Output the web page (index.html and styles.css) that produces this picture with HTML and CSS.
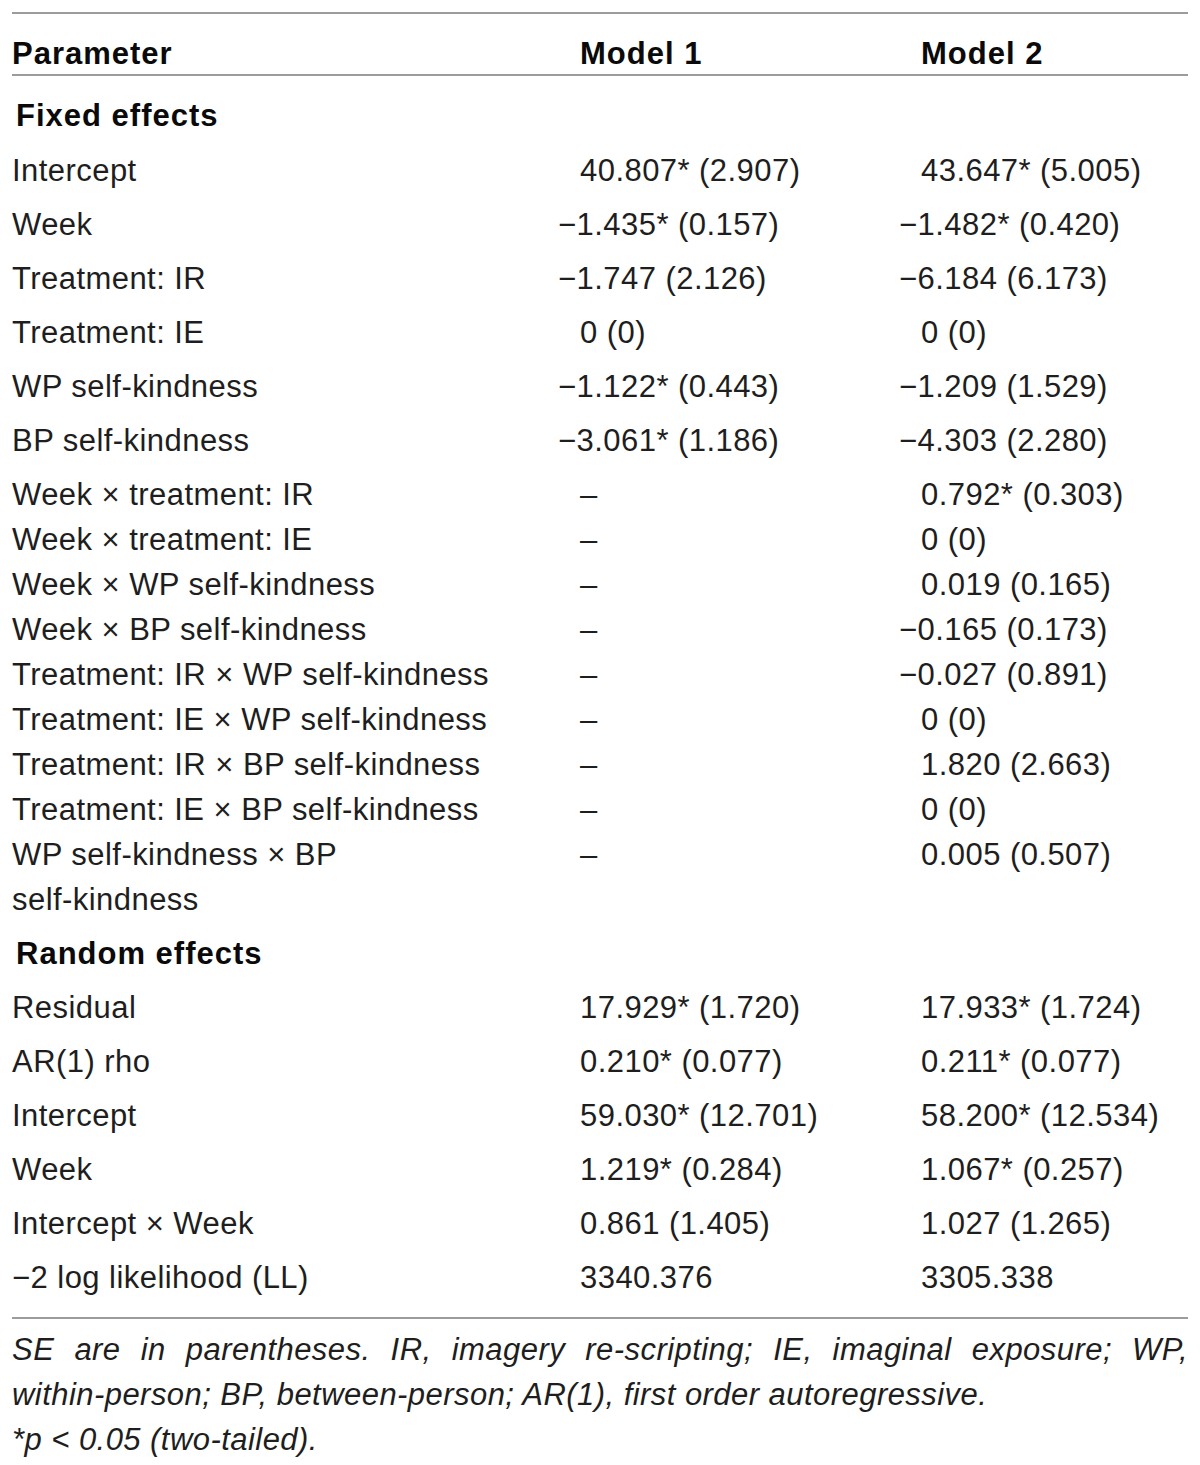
FILE: index.html
```html
<!DOCTYPE html>
<html lang="en">
<head>
<meta charset="utf-8">
<title>Table</title>
<link rel="stylesheet" href="styles.css">
</head>
<body>
<div class="wrap">
  <table class="stats">
    <colgroup>
      <col class="c-param">
      <col class="c-m1">
      <col class="c-m2">
    </colgroup>
    <thead>
      <tr>
        <th>Parameter</th>
        <th>Model 1</th>
        <th>Model 2</th>
      </tr>
    </thead>
    <tbody>
      <tr class="section first"><td colspan="3">Fixed effects</td></tr>
      <tr><td>Intercept</td><td>40.807* (2.907)</td><td>43.647* (5.005)</td></tr>
      <tr><td>Week</td><td class="neg">−1.435* (0.157)</td><td class="neg">−1.482* (0.420)</td></tr>
      <tr><td>Treatment: IR</td><td class="neg">−1.747 (2.126)</td><td class="neg">−6.184 (6.173)</td></tr>
      <tr><td>Treatment: IE</td><td>0 (0)</td><td>0 (0)</td></tr>
      <tr><td>WP self-kindness</td><td class="neg">−1.122* (0.443)</td><td class="neg">−1.209 (1.529)</td></tr>
      <tr><td>BP self-kindness</td><td class="neg">−3.061* (1.186)</td><td class="neg">−4.303 (2.280)</td></tr>
      <tr><td>Week × treatment: IR</td><td>–</td><td>0.792* (0.303)</td></tr>
      <tr class="tight"><td>Week × treatment: IE</td><td>–</td><td>0 (0)</td></tr>
      <tr class="tight"><td>Week × WP self-kindness</td><td>–</td><td>0.019 (0.165)</td></tr>
      <tr class="tight"><td>Week × BP self-kindness</td><td>–</td><td class="neg">−0.165 (0.173)</td></tr>
      <tr class="tight"><td>Treatment: IR × WP self-kindness</td><td>–</td><td class="neg">−0.027 (0.891)</td></tr>
      <tr class="tight"><td>Treatment: IE × WP self-kindness</td><td>–</td><td>0 (0)</td></tr>
      <tr class="tight"><td>Treatment: IR × BP self-kindness</td><td>–</td><td>1.820 (2.663)</td></tr>
      <tr class="tight"><td>Treatment: IE × BP self-kindness</td><td>–</td><td>0 (0)</td></tr>
      <tr class="tight"><td>WP self-kindness × BP<br>self-kindness</td><td>–</td><td>0.005 (0.507)</td></tr>
      <tr class="section"><td colspan="3">Random effects</td></tr>
      <tr><td>Residual</td><td>17.929* (1.720)</td><td>17.933* (1.724)</td></tr>
      <tr><td>AR(1) rho</td><td>0.210* (0.077)</td><td>0.211* (0.077)</td></tr>
      <tr><td>Intercept</td><td>59.030* (12.701)</td><td>58.200* (12.534)</td></tr>
      <tr><td>Week</td><td>1.219* (0.284)</td><td>1.067* (0.257)</td></tr>
      <tr><td>Intercept × Week</td><td>0.861 (1.405)</td><td>1.027 (1.265)</td></tr>
      <tr class="last"><td>−2 log likelihood (LL)</td><td>3340.376</td><td>3305.338</td></tr>
    </tbody>
  </table>
  <div class="notes">
    <p class="note-just">SE are in parentheses. IR, imagery re-scripting; IE, imaginal exposure; WP, <span class="nowrap">within-person;</span> BP, <span class="nowrap">between-person;</span> AR(1), first order autoregressive.</p>
    <p class="note">*p &lt; 0.05 (two-tailed).</p>
  </div>
</div>
</body>
</html>
```

FILE: styles.css
```css
html, body {
  margin: 0;
  padding: 0;
  background: #ffffff;
}

.wrap {
  padding: 12px 12px 0 12px;
  font-family: "Liberation Sans", Arial, sans-serif;
  font-size: 31px;
  letter-spacing: 0.45px;
  color: #1e1e1e;
}

.stats {
  width: 100%;
  border-collapse: collapse;
  border-top: 2px solid #9c9c9c;
  border-bottom: 2px solid #9c9c9c;
}

.c-param { width: 568px; }
.c-m1 { width: 341px; }

.stats th,
.stats td {
  padding: 9px 0 0 0;
  line-height: 45px;
  text-align: left;
  vertical-align: top;
  white-space: nowrap;
}

.stats th {
  font-weight: bold;
  letter-spacing: 1px;
  color: #0a0a0a;
  line-height: 40px;
  padding-top: 20px;
  border-bottom: 2px solid #9c9c9c;
}

.stats .section td {
  font-weight: bold;
  letter-spacing: 1px;
  color: #0a0a0a;
  padding-left: 4px;
}

.stats .section.first td {
  padding-top: 16.5px;
  padding-bottom: 1px;
}

.stats .tight td {
  padding-top: 0;
}

.stats .last td {
  padding-bottom: 17.5px;
}

.stats td.neg {
  text-indent: -22px;
}

.notes {
  padding-top: 8px;
  font-style: italic;
}

.notes p {
  margin: 0;
  line-height: 45px;
}

.note-just {
  text-align: justify;
}

.nowrap {
  white-space: nowrap;
}
```
